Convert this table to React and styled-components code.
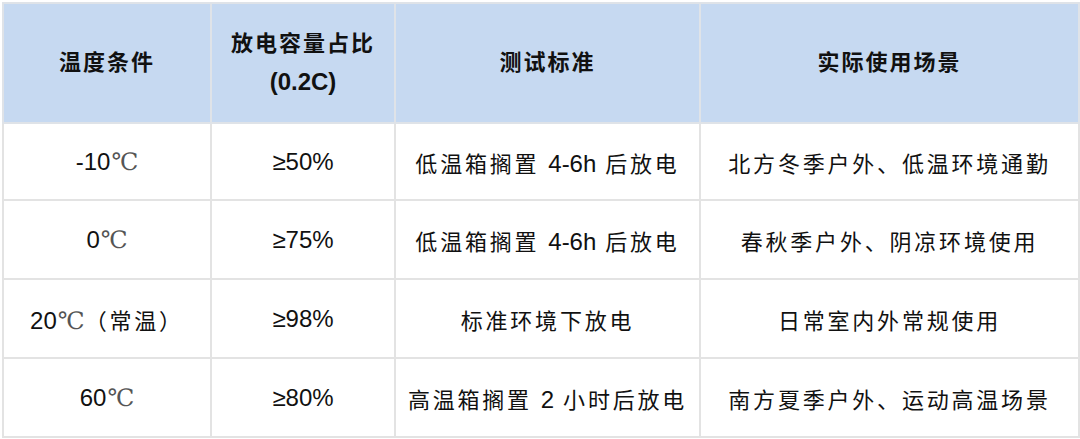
import React from 'react';
import styled, { createGlobalStyle } from 'styled-components';

const GlobalStyle = createGlobalStyle`
    html, body {
        margin: 0;
        padding: 0;
        background: #ffffff;
    }
    body {
        font-family: "Liberation Sans", "Noto Sans CJK SC", sans-serif;
        color: #111111;
    }
`;

const Wrapper = styled.div`
    padding: 2px 0 0 2px;
`;

const Table = styled.table`
    width: 1076px;
    border-collapse: collapse;
    table-layout: fixed;
    border: 2px solid #e3e3e3;
`;

const HeadCell = styled.th`
    height: 118px;
    padding: 0;
    background: #c6d9f1;
    border: 2px solid #dfe3e8;
    font-size: 22px;
    font-weight: bold;
    letter-spacing: 2px;
    line-height: 38px;
    text-align: center;
    vertical-align: middle;
    color: #111111;
`;

const Row = styled.tr`
    height: ${(p) => p.$h}px;
`;

const Cell = styled.td`
    padding: 0;
    border: 2px solid #e3e3e3;
    font-size: 22px;
    letter-spacing: 2.8px;
    text-align: center;
    vertical-align: middle;
    white-space: nowrap;
`;

const Latin = styled.span`
    font-family: "Liberation Sans", Arial, sans-serif;
    font-size: 24px;
    letter-spacing: 0;
`;

const Deg = styled.span`
    font-family: "Liberation Serif", "DejaVu Serif", serif;
    font-size: 24px;
    letter-spacing: 0;
    margin-left: 1px;
    color: #555555;
`;

// wrap runs of latin characters so they get their own size
const Mixed = ({ text }) =>
    text.split(/([0-9A-Za-z.\-≥%()]+)/).map((part, i) =>
        /^[0-9A-Za-z.\-≥%()]+$/.test(part) ? <Latin key={i}>{part}</Latin> : part
    );

const columns = [208, 184, 305, 379];

const rows = [
    { temp: '-10', note: '', ratio: '≥50%', test: '低温箱搁置 4-6h 后放电', scene: '北方冬季户外、低温环境通勤', h: 77 },
    { temp: '0', note: '', ratio: '≥75%', test: '低温箱搁置 4-6h 后放电', scene: '春秋季户外、阴凉环境使用', h: 79 },
    { temp: '20', note: '（常温）', ratio: '≥98%', test: '标准环境下放电', scene: '日常室内外常规使用', h: 79 },
    { temp: '60', note: '', ratio: '≥80%', test: '高温箱搁置 2 小时后放电', scene: '南方夏季户外、运动高温场景', h: 79 },
];

const App = () => (
    <Wrapper>
        <GlobalStyle />
        <Table>
            <colgroup>
                {columns.map((w, i) => (
                    <col key={i} style={{ width: w }} />
                ))}
            </colgroup>
            <thead>
                <tr>
                    <HeadCell>温度条件</HeadCell>
                    <HeadCell>
                        放电容量占比
                        <br />
                        <Latin>(0.2C)</Latin>
                    </HeadCell>
                    <HeadCell>测试标准</HeadCell>
                    <HeadCell>实际使用场景</HeadCell>
                </tr>
            </thead>
            <tbody>
                {rows.map((r) => (
                    <Row key={r.temp} $h={r.h}>
                        <Cell>
                            <Latin>{r.temp}</Latin>
                            <Deg>℃</Deg>
                            {r.note}
                        </Cell>
                        <Cell>
                            <Mixed text={r.ratio} />
                        </Cell>
                        <Cell>
                            <Mixed text={r.test} />
                        </Cell>
                        <Cell>{r.scene}</Cell>
                    </Row>
                ))}
            </tbody>
        </Table>
    </Wrapper>
);

export default App;
